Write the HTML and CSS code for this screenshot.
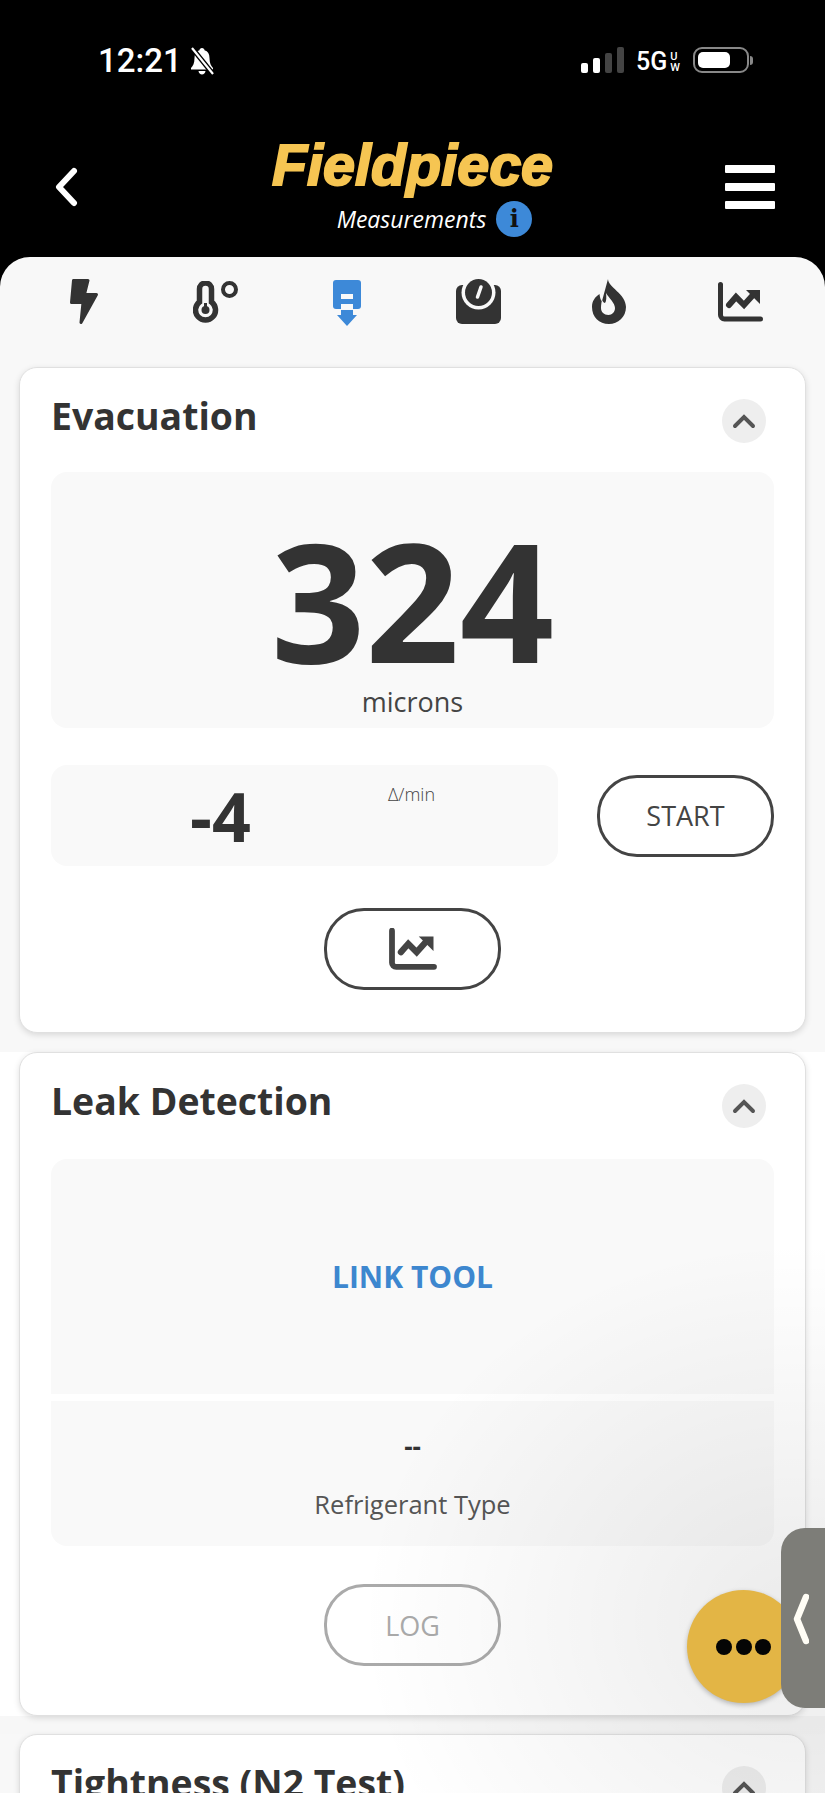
FILE: index.html
```html
<!DOCTYPE html>
<html lang="en">
<head>
  <meta charset="UTF-8">
  <meta name="viewport" content="width=device-width, initial-scale=1.0">
  <title>Fieldpiece Measurements</title>
  <link rel="stylesheet" href="styles.css">
</head>
<body>
  <div class="app">
    <!-- Status bar -->
    <div class="status">
      <div class="status-left">
        <span class="time">12:21</span>
        <svg class="bell" viewBox="0 0 26 28">
          <path d="M13 1c-1.500 0-2.400 1-2.500 2.200C7 4.300 5.500 7 5.500 11c0 5-1.500 8-3.500 10v1.500h22V21c-2-2-3.500-5-3.500-10 0-4-1.500-6.700-5-7.800C15.400 2 14.500 1 13 1zM9.500 24c.3 2 1.700 3.500 3.500 3.500s3.200-1.500 3.500-3.500z" fill="#fff"/>
          <path d="M3 1l21 26" stroke="#000" stroke-width="5"/>
          <path d="M3 1l21 26" stroke="#fff" stroke-width="2.200"/>
        </svg>
      </div>
      <div class="status-right">
        <div class="signal">
          <i class="bar bar1"></i><i class="bar bar2"></i><i class="bar bar3"></i><i class="bar bar4"></i>
        </div>
        <div class="network">5G<span class="uw">U<br>W</span></div>
        <div class="battery"><i class="battery-fill"></i></div>
        <i class="battery-cap"></i>
      </div>
    </div>

    <!-- Header -->
    <header class="nav">
      <svg class="back" viewBox="0 0 26 40">
        <path d="M21 4L6 20l15 16" fill="none" stroke="#fff" stroke-width="6" stroke-linecap="round" stroke-linejoin="round"/>
      </svg>
      <div class="brand">
        <div class="logo">Fieldpiece</div>
        <div class="subtitle">
          <span>Measurements</span>
          <span class="info">i</span>
        </div>
      </div>
      <div class="burger"><i></i><i></i><i></i></div>
    </header>

    <main class="sheet">
      <!-- Tabs -->
      <nav class="tabs">
        <svg class="tab-bolt" viewBox="0 0 28 45"><path d="M3.500 1.500H18L14.500 15.500H26.500L11 43.500L13 23.500H1.500Z" fill="#333" stroke="#333" stroke-width="3" stroke-linejoin="round"/></svg>
        <svg class="tab-temp" viewBox="0 0 45 42">
          <path d="M6.500 21V8a6 6 0 0 1 12 0V21a10 10 0 1 1-12 0Z" fill="none" stroke="#333" stroke-width="5.500"/>
          <circle cx="12.500" cy="29" r="4" fill="#333"/>
          <rect x="11" y="22" width="3" height="7" fill="#333"/>
          <circle cx="36.500" cy="8.500" r="6.500" fill="none" stroke="#333" stroke-width="4"/>
        </svg>
        <svg class="tab-evac" viewBox="0 0 28 46">
          <rect width="28" height="29" rx="3" fill="#3d89d8"/>
          <rect x="8" y="14" width="12" height="5" fill="#f9f9f9"/>
          <rect x="8" y="24" width="12" height="5" fill="#f9f9f9"/>
          <path d="M8 30H20V35H24L14 46L4 35H8Z" fill="#3d89d8"/>
        </svg>
        <svg class="tab-scale" viewBox="0 0 45 45">
          <rect y="6" width="45" height="39" rx="6" fill="#333"/>
          <circle cx="22.500" cy="13.500" r="17" fill="#f9f9f9"/>
          <circle cx="22.500" cy="13.500" r="13.500" fill="#333"/>
          <path d="M25 8L21.500 18" stroke="#f9f9f9" stroke-width="3.500" stroke-linecap="round"/>
        </svg>
        <svg class="tab-flame" viewBox="0 0 34 45">
          <path d="M16 0C16 8 34 15 34 28C34 38 26 45 17 45C7 45 0 38 0 28C0 22 3 18 7.500 15C8 19 9 22 10 22Z" fill="#333"/>
          <path d="M10 21C11 23 12 24 13 24C14.500 22 14.500 18 14 14C17 19 23 24 23 29C23 33 20 36 16.500 36C12 36 9 33 9 29C9 26 9.500 23 10 21Z" fill="#f9f9f9"/>
        </svg>
        <svg class="tab-chart" viewBox="0 0 45 40">
          <path d="M2.500 2.500V33a4 4 0 0 0 4 4H42.500" fill="none" stroke="#333" stroke-width="5" stroke-linecap="round"/>
          <path d="M11 23L18 15L26 23L35 13" fill="none" stroke="#333" stroke-width="6" stroke-linecap="round"/>
          <path d="M28 8H42V22Z" fill="#333"/>
        </svg>
      </nav>

      <!-- Evacuation -->
      <section class="band">
        <div class="card">
          <div class="card-head">
            <h2>Evacuation</h2>
            <button class="collapse"><svg viewBox="0 0 24 16"><path d="M3 13L12 4l9 9" fill="none" stroke="#555" stroke-width="4" stroke-linecap="round"/></svg></button>
          </div>
          <div class="reading">
            <div class="reading-value">324</div>
            <div class="reading-unit">microns</div>
          </div>
          <div class="rate-row">
            <div class="rate">
              <span class="rate-value">-4</span>
              <span class="rate-unit">&Delta;/min</span>
            </div>
            <button class="pill">START</button>
          </div>
          <div class="pill-row">
            <button class="pill">
              <svg class="pill-chart" viewBox="0 0 45 40">
                <path d="M2.500 2.500V33a4 4 0 0 0 4 4H42.500" fill="none" stroke="#444" stroke-width="5.500" stroke-linecap="round"/>
                <path d="M11 23L18 15L26 23L35 13" fill="none" stroke="#444" stroke-width="6" stroke-linecap="round"/>
                <path d="M28 8H42V22Z" fill="#444"/>
              </svg>
            </button>
          </div>
        </div>
      </section>

      <!-- Leak Detection -->
      <section class="band band-white">
        <div class="card">
          <div class="card-head">
            <h2>Leak Detection</h2>
            <button class="collapse"><svg viewBox="0 0 24 16"><path d="M3 13L12 4l9 9" fill="none" stroke="#555" stroke-width="4" stroke-linecap="round"/></svg></button>
          </div>
          <div class="link-panel">LINK TOOL</div>
          <div class="type-panel">
            <div class="type-value">--</div>
            <div class="type-label">Refrigerant Type</div>
          </div>
          <div class="pill-row">
            <button class="pill pill-off">LOG</button>
          </div>
        </div>
      </section>

      <!-- Tightness -->
      <section class="band">
        <div class="card">
          <div class="card-head">
            <h2>Tightness (N2 Test)</h2>
            <button class="collapse"><svg viewBox="0 0 24 16"><path d="M3 13L12 4l9 9" fill="none" stroke="#555" stroke-width="4" stroke-linecap="round"/></svg></button>
          </div>
        </div>
      </section>
    </main>

    <!-- Floating things over the page -->
    <div class="shade"></div>
    <div class="fab"><i></i><i></i><i></i></div>
    <div class="side-tab">
      <svg viewBox="0 0 16 52"><path d="M13 4L4 26l9 22" fill="none" stroke="#fffdf5" stroke-width="6.500" stroke-linecap="round" stroke-linejoin="round"/></svg>
    </div>
  </div>
</body>
</html>
```

FILE: styles.css
```css
/* Global Styles */
* {
  margin: 0;
  padding: 0;
  box-sizing: border-box;
}

body {
  font-family: 'Open Sans', sans-serif;
  background-color: #000;
  color: #333;
}

.app {
  position: relative;
  width: 825px;
  height: 1793px;
  overflow: hidden;
  background-color: #000;
}

svg {
  display: block;
}

/* Status bar */
.status {
  height: 122px;
  display: flex;
  justify-content: space-between;
  padding: 47px 72px 0 98px;
  color: #fff;
}

.status-left {
  display: flex;
  gap: 7px;
  height: 28px;
  align-items: center;
}

.time {
  font-family: Roboto, sans-serif;
  font-size: 33px;
  font-weight: 500;
  line-height: 28px;
}

.bell {
  width: 26px;
  height: 28px;
}

.status-right {
  display: flex;
  align-items: flex-start;
  height: 28px;
}

.signal {
  display: flex;
  align-items: flex-end;
  gap: 5px;
  height: 26px;
  margin-right: 12px;
}

.bar {
  display: block;
  width: 7px;
  border-radius: 2px;
  background: #fff;
}

.bar1 { height: 10px; }
.bar2 { height: 15px; }
.bar3 { height: 20px; background: #444; }
.bar4 { height: 26px; background: #444; }

.network {
  display: flex;
  font-family: Roboto, sans-serif;
  font-size: 25px;
  font-weight: 500;
  line-height: 30px;
  margin-right: 13px;
}

.uw {
  font-size: 11px;
  line-height: 11px;
  padding: 4px 0 0 3px;
}

.battery {
  width: 56px;
  height: 26px;
  border: 2px solid #888;
  border-radius: 9px;
  padding: 3px;
}

.battery-fill {
  display: block;
  width: 32px;
  height: 16px;
  background: #fff;
  border-radius: 5px;
}

.battery-cap {
  display: block;
  width: 3px;
  height: 9px;
  margin: 9px 0 0 1px;
  background: #888;
  border-radius: 0 3px 3px 0;
}

/* Header */
.nav {
  height: 135px;
  display: grid;
  grid-template-columns: 1fr auto 1fr;
  align-items: start;
  padding: 0 50px;
}

.back {
  width: 26px;
  height: 40px;
  margin: 45px 0 0 3px;
}

.brand {
  display: flex;
  flex-direction: column;
  align-items: center;
  padding-top: 11px;
}

.logo {
  font-family: 'Liberation Sans', Arial, sans-serif;
  font-size: 57.500px;
  font-weight: 700;
  font-style: italic;
  line-height: 64px;
  color: #f6c552;
  -webkit-text-stroke: 2px #f6c552;
}

.subtitle {
  display: flex;
  align-items: center;
  gap: 10px;
  margin: 4px 0 0 44px;
  color: #fff;
  font-size: 23px;
  font-style: italic;
}

.info {
  width: 36px;
  height: 36px;
  border-radius: 50%;
  background: #3d89d8;
  color: #111;
  font-family: 'DejaVu Serif', serif;
  font-size: 24px;
  font-weight: 700;
  font-style: normal;
  line-height: 36px;
  text-align: center;
}

.burger {
  justify-self: end;
  display: flex;
  flex-direction: column;
  gap: 10px;
  margin-top: 43px;
}

.burger i {
  display: block;
  width: 50px;
  height: 8px;
  background: #fff;
  border-radius: 1px;
}

/* Sheet and tabs */
.sheet {
  height: 1536px;
  background-color: #f8f8f8;
  border-radius: 30px 30px 0 0;
  overflow: hidden;
}

.tabs {
  display: grid;
  grid-template-columns: repeat(6, 131.200px);
  justify-content: center;
  justify-items: center;
  align-items: center;
  height: 110px;
  padding-top: 20px;
  padding-bottom: 41px;
}

.tab-bolt { width: 28px; height: 45px; margin-right: 2px; }
.tab-temp { width: 45px; height: 42px; }
.tab-evac { width: 28px; height: 46px; margin-top: 2px; }
.tab-scale { width: 45px; height: 45px; }
.tab-flame { width: 34px; height: 45px; }
.tab-chart { width: 45px; height: 40px; }

/* Cards */
.band {
  padding: 0 19px;
}

.band-white {
  padding-bottom: 18px;
  margin-top: 19px;
  background: linear-gradient(#fff 0, #fff 664px, #f7f7f7 664px);
}

.card {
  background: #fff;
  border: 1px solid #e0e0e0;
  border-radius: 18px;
  box-shadow: 0 2px 6px rgba(0, 0, 0, 0.13);
  padding: 0 31px;
  height: 666px;
}

.band-white .card {
  height: 664px;
}

.card-head {
  display: flex;
  justify-content: space-between;
  height: 104px;
  padding-top: 29px;
}

.band-white .card-head {
  height: 106px;
}

h2 {
  font-size: 37.400px;
  font-weight: 700;
  line-height: 38px;
  color: #333;
}

.collapse {
  width: 44px;
  height: 44px;
  border: none;
  border-radius: 50%;
  background: #eee;
  margin: 2px 8px 0 0;
  display: flex;
  align-items: center;
  justify-content: center;
}

.collapse svg {
  width: 24px;
  height: 16px;
}

/* Evacuation */
.reading {
  height: 256px;
  background: #f9f9f9;
  border-radius: 16px;
  text-align: center;
}

.reading-value {
  font-size: 165px;
  font-weight: 700;
  line-height: 130px;
  padding-top: 62px;
  color: #333;
}

.reading-unit {
  font-size: 27px;
  line-height: 34px;
  color: #444;
  margin-top: 21px;
}

.rate-row {
  display: flex;
  align-items: center;
  justify-content: space-between;
  margin-top: 37px;
}

.rate {
  position: relative;
  width: 507px;
  height: 101px;
  background: #f9f9f9;
  border-radius: 16px;
}

.rate-value {
  position: absolute;
  left: 139px;
  top: 6px;
  font-size: 68px;
  font-weight: 700;
  line-height: 90px;
}

.rate-unit {
  position: absolute;
  left: 337px;
  top: 18px;
  font-size: 18px;
  font-weight: 300;
  line-height: 22px;
  color: #444;
}

.pill {
  width: 177px;
  height: 82px;
  border: 3px solid #444;
  border-radius: 40px;
  background: #fff;
  color: #444;
  font-family: 'Open Sans', sans-serif;
  font-size: 27px;
  font-weight: 500;
  display: flex;
  align-items: center;
  justify-content: center;
}

.pill-row {
  display: flex;
  justify-content: center;
  margin-top: 42px;
}

.pill-chart {
  width: 48px;
  height: 42px;
}

.pill-off {
  border-color: #aaa;
  color: #aaa;
}

/* Leak Detection */
.link-panel {
  height: 235px;
  background: #f9f9f9;
  border-radius: 16px 16px 0 0;
  display: flex;
  align-items: center;
  justify-content: center;
  font-size: 30px;
  font-weight: 700;
  color: #3d87cf;
}

.type-panel {
  height: 145px;
  margin-top: 7px;
  background: #f9f9f9;
  border-radius: 0 0 16px 16px;
  text-align: center;
  padding-top: 28px;
}

.type-value {
  font-size: 26px;
  font-weight: 700;
  line-height: 34px;
}

.type-label {
  font-size: 25.500px;
  line-height: 32px;
  color: #555;
  margin-top: 25px;
}

.band-white .pill-row {
  margin-top: 38px;
}

/* Overlays */
.shade {
  position: absolute;
  left: 0;
  top: 0;
  width: 825px;
  height: 1793px;
  background: radial-gradient(ellipse 440px 380px at 800px 1620px, rgba(0, 0, 0, 0.08), rgba(0, 0, 0, 0));
  pointer-events: none;
}

.fab {
  position: absolute;
  left: 687px;
  top: 1590px;
  width: 113px;
  height: 113px;
  border-radius: 50%;
  background: #e3b545;
  box-shadow: 0 2px 5px rgba(0, 0, 0, 0.25);
  display: flex;
  align-items: center;
  justify-content: center;
  gap: 3.500px;
}

.fab i {
  display: block;
  width: 16px;
  height: 16px;
  border-radius: 50%;
  background: #050505;
}

.side-tab {
  position: absolute;
  left: 781px;
  top: 1528px;
  width: 44px;
  height: 180px;
  background: #7d7d78;
  border-radius: 24px 0 0 24px;
  padding: 65px 0 0 12px;
}

.side-tab svg {
  width: 16px;
  height: 52px;
}
```
